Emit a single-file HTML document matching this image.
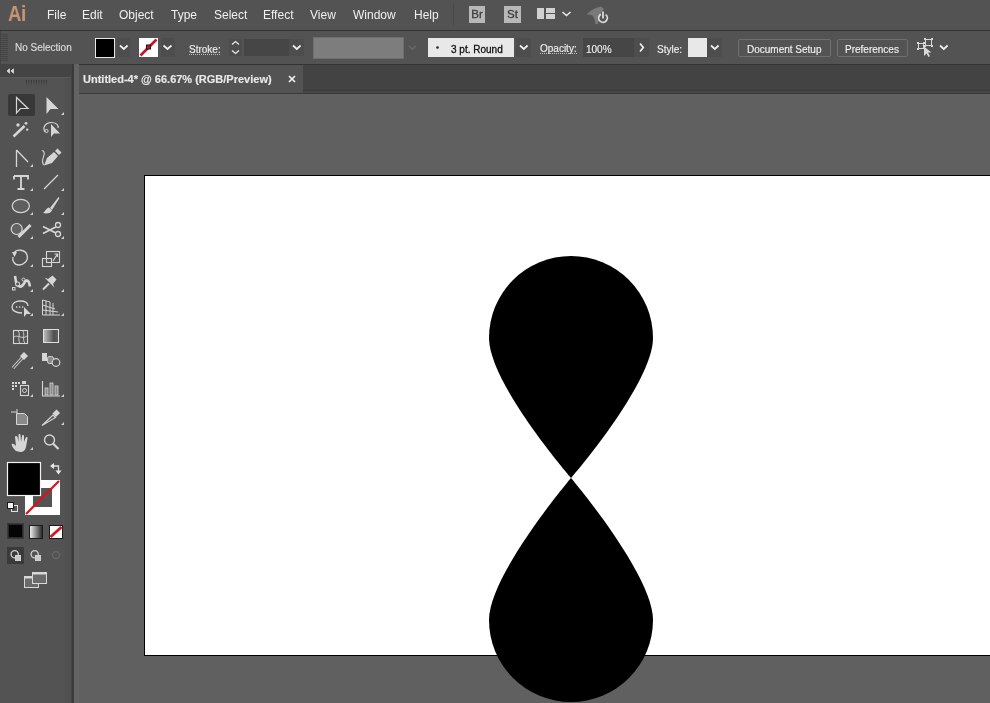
<!DOCTYPE html>
<html><head><meta charset="utf-8">
<style>
*{margin:0;padding:0;box-sizing:border-box}
html,body{-webkit-font-smoothing:antialiased;width:990px;height:703px;overflow:hidden;background:#606060;font-family:"Liberation Sans",sans-serif}
.a{position:absolute}
#menubar{left:0;top:0;width:990px;height:30px;background:#535353}
#mline{left:0;top:30px;width:990px;height:1px;background:#333}
#ctrl{left:0;top:31px;width:990px;height:33px;background:#535353}
#cline{left:0;top:64px;width:990px;height:1px;background:#333}
#tabbar{left:73px;top:65px;width:917px;height:28px;background:#434343}
#tab{left:79px;top:65px;width:224px;height:28px;background:#535353}
#tabline{left:73px;top:93px;width:917px;height:1px;background:#3a3a3a}
#tools{left:0;top:65px;width:72px;height:638px;background:#535353}
#tooldiv{left:72px;top:65px;width:1px;height:638px;background:#3a3a3a}
.mi{will-change:transform;position:absolute;top:8px;font-size:12px;color:#f0f0f0;white-space:nowrap}
.lbl{will-change:transform;position:absolute;font-size:11px;color:#eeeeee;white-space:nowrap;-webkit-text-stroke:0.15px currentColor}
#artboard{left:144px;top:175px;width:900px;height:481px;background:#fff;border:1px solid #000}
</style></head><body>
<div class="a" id="menubar"></div>
<div class="a" id="mline"></div>
<div class="a" id="ctrl"></div>
<div class="a" id="cline"></div>
<div class="a" id="tabbar"></div>
<div class="a" id="tab"></div>
<div class="a" id="tabline"></div>
<div class="a" style="left:303px;top:90px;width:687px;height:1px;background:#3a3a3a"></div>
<div class="a" style="left:303px;top:91px;width:687px;height:2px;background:#484848"></div>
<div class="a" id="tools"></div>
<div class="a" id="tooldiv"></div>
<div class="a" id="artboard"></div>
<svg class="a" style="left:0;top:0" width="990" height="703">
<path d="M571 256 A82 82 0 0 1 653 338 C653 383.3 571 478 571 478 C571 478 489 383.3 489 338 A82 82 0 0 1 571 256 Z" fill="#000"/>
<path d="M571 702 A82 82 0 0 0 653 620 C653 574.7 571 478 571 478 C571 478 489 574.7 489 620 A82 82 0 0 0 571 702 Z" fill="#000"/>
</svg>

<!-- menubar icons -->
<svg class="a" style="left:0;top:0" width="990" height="30">
 <rect x="453" y="4" width="1" height="21" fill="#474747"/>
 <rect x="469" y="6" width="16" height="17" fill="#b8b8b8"/>
 <rect x="504" y="6" width="17" height="17" fill="#b8b8b8"/>
 <g fill="#d2d2d2">
  <rect x="537" y="8" width="7" height="11"/>
  <rect x="546" y="8" width="9" height="5"/>
  <rect x="546" y="14" width="9" height="5"/>
 </g>
 <path d="M562.5 12 l4 3.5 l4 -3.5" fill="none" stroke="#e8e8e8" stroke-width="1.6"/>
 <path d="M586.5 14.5 C590 11 594 8.5 597.5 7.5 L601 6.5 L604 9 L601 12.5 C599 16 598.5 20 598 24 L595.5 24 C595 20 594 17.5 592.5 15.5 C590.5 14.5 588.5 14.5 586.5 14.5 Z" fill="#7a7a7a"/>
 <circle cx="603" cy="18" r="4.3" fill="none" stroke="#dcdcdc" stroke-width="1.8" stroke-dasharray="21.5 5.5" transform="rotate(-52 603 18)"/>
 <path d="M603 11.5 L603 18.5" stroke="#dcdcdc" stroke-width="1.8"/>
</svg>
<div class="a" style="will-change:transform;left:469px;top:6px;width:16px;height:17px;font-size:11.5px;color:#3c3c3c;text-align:center;line-height:17px;-webkit-text-stroke:0.3px #3c3c3c">Br</div>
<div class="a" style="will-change:transform;left:504px;top:6px;width:17px;height:17px;font-size:11.5px;color:#3c3c3c;text-align:center;line-height:17px;-webkit-text-stroke:0.3px #3c3c3c">St</div>
<!-- menu -->
<div class="a" style="will-change:transform;left:8px;top:1px;font-size:22px;font-weight:bold;color:#c99672;white-space:nowrap;transform:scaleX(0.84);transform-origin:0 0;letter-spacing:-0.5px">Ai</div>
<div class="mi" style="left:47px">File</div>
<div class="mi" style="left:82px">Edit</div>
<div class="mi" style="left:119px">Object</div>
<div class="mi" style="left:171px">Type</div>
<div class="mi" style="left:214px">Select</div>
<div class="mi" style="left:263px">Effect</div>
<div class="mi" style="left:310px">View</div>
<div class="mi" style="left:353px">Window</div>
<div class="mi" style="left:414px">Help</div>
<div class="lbl" style="left:83px;top:73px;font-size:11px;font-weight:bold;color:#e8e8e8">Untitled-4* @ 66.67% (RGB/Preview)</div>
<svg class="a" style="left:286px;top:73px" width="12" height="12"><path d="M3 3 L9 9 M9 3 L3 9" stroke="#f0f0f0" stroke-width="1.7"/></svg>
<div class="lbl" style="left:15px;top:42px;font-size:10px;color:#dcdcdc">No Selection</div>


<!-- toolbar -->
<svg class="a" style="left:0;top:64px" width="80" height="639">
 <rect x="0" y="0" width="72" height="13" fill="#444444"/>
 <rect x="0" y="13" width="72" height="1" fill="#5a5a5a"/>
 <path d="M9.5 4.8 L7 7 L9.5 9.2 Z M13.5 4.8 L11 7 L13.5 9.2 Z" fill="#d8d8d8" stroke="#d8d8d8" stroke-width="0.8"/>
 <defs><linearGradient id="grip" x1="0" y1="0" x2="0" y2="1"><stop offset="0" stop-color="#333"/><stop offset="1" stop-color="#555"/></linearGradient></defs>
 <g fill="url(#grip)">
  <rect x="26" y="16" width="1" height="7"/><rect x="28.5" y="16" width="1" height="7"/><rect x="31" y="16" width="1" height="7"/>
  <rect x="33.5" y="16" width="1" height="7"/><rect x="36" y="16" width="1" height="7"/><rect x="38.5" y="16" width="1" height="7"/>
  <rect x="41" y="16" width="1" height="7"/><rect x="43.5" y="16" width="1" height="7"/><rect x="46" y="16" width="1" height="7"/>
 </g>
 <rect x="65" y="14" width="6" height="625" fill="#505050"/>
 <rect x="71" y="0" width="1" height="639" fill="#444"/>
 <rect x="72" y="0" width="2" height="639" fill="#3a3a3a"/>
 <rect x="74" y="0" width="5" height="639" fill="#636363"/>
</svg>
<svg class="a" style="left:0;top:0" width="72" height="703">
 <rect x="8" y="94" width="27" height="22" rx="2" fill="#383838"/>
 <g fill="#d6d6d6" stroke="#d6d6d6">
 <!-- selection -->
 <path d="M16.5 97.5 L16.5 113 L20.5 108.5 L28 108.5 Z" fill="none" stroke-width="1.2"/>
 <!-- direct selection -->
 <path d="M46.5 97 L46.5 114 L50.5 109 L58.5 109 Z" stroke="none"/>
 <!-- magic wand -->
 <path d="M13.5 136.5 L24.5 126" stroke-width="2.5" fill="none"/>
 <circle cx="18" cy="125" r="1.7" stroke="none"/>
 <circle cx="26" cy="123.3" r="1.4" stroke="none"/>
 <circle cx="27.2" cy="129.6" r="1.2" stroke="none"/>
 <!-- lasso -->
 <path d="M45 132 C42 127 46 122.5 51 122.5 C56 122.5 59 125 58 128" fill="none" stroke-width="1.2"/>
 <circle cx="46.5" cy="131" r="1.6" fill="none" stroke-width="1"/>
 <path d="M51 124 L51 137 L54 133.5 L60 133.5 Z" stroke="none"/>
 <!-- curvature -->
 <path d="M16.5 150 L16.5 167 M16.5 150 L28 162" fill="none" stroke-width="1.3"/>
 <!-- pen -->
 <path d="M44 165.5 L47 158 L54 152 L58 156 L52 163 Z" stroke="none"/>
 <path d="M55 151 L57.5 148.5 L61.5 152.5 L59 155 Z" stroke="none"/>
 <path d="M44 165 C41 163 43 158 44 155 C45 152 43 150 42 151" fill="none" stroke-width="1.1"/>
 <!-- type -->
 <path d="M14 176 L28 176 L28 179.5 M14 179.5 L14 176 M21 176 L21 189 M17.5 189 L24.5 189" fill="none" stroke-width="1.8"/>
 <!-- line -->
 <path d="M44 189 L58 175" fill="none" stroke-width="1.3"/>
 <!-- ellipse -->
 <ellipse cx="20.8" cy="206" rx="8.6" ry="6.6" fill="#5e5e5e" stroke-width="1.2"/>
 <!-- paintbrush -->
 <path d="M50 208 L58.5 197 L59.5 198 L52 210 Z" stroke="none"/>
 <path d="M43 213 C45 212 46 208 49 207.5 L52 210.5 C51 213 47 214 43 213 Z" stroke="none"/>
 <!-- shaper/pencil -->
 <circle cx="16.7" cy="229" r="5.5" fill="#626262" stroke-width="1.2"/>
 <path d="M18.5 237 L30.5 225" fill="none" stroke-width="3"/>
 <!-- scissors -->
 <circle cx="58" cy="225" r="2.5" fill="none" stroke-width="1.3"/>
 <circle cx="58" cy="234" r="2.5" fill="none" stroke-width="1.3"/>
 <path d="M43 226.5 L55.8 233 M43 233.5 L55.8 227" fill="none" stroke-width="1.8"/>
 <!-- rotate -->
 <path d="M14 253 C16.5 249 25 249 27 255 C29 261 23 265 19 265 C14 265 12 260 13 257" fill="none" stroke-width="1.3"/>
 <path d="M12 252 L17 252 L14.5 257 Z" stroke="none"/>
 <!-- scale -->
 <rect x="46.5" y="251.5" width="13" height="11" fill="none" stroke-width="1.1"/>
 <rect x="42.5" y="258.5" width="9" height="8" fill="none" stroke-width="1.1"/>
 <path d="M53 261 L57.5 254 M54.5 254 L57.5 254 L57.5 257" fill="none" stroke-width="1.2"/>
 <!-- width/warp -->
 <path d="M15 276 C16 281 15.5 285 19.5 286.5 C23.5 287.5 24 281.5 26.5 280.5 C28.5 280 29.5 283 29.8 286.5" fill="none" stroke-width="2.6"/>
 <circle cx="17.6" cy="284" r="2" fill="#535353" stroke-width="1.1"/>
 <circle cx="23.5" cy="279.5" r="1.5" fill="#535353" stroke-width="1"/>
 <rect x="12.5" y="287.5" width="2.5" height="2.5" fill="none" stroke-width="1"/>
 <!-- puppet pin -->
 <path d="M48 279 L52.5 275.5 L56.5 279.5 L53 284 L54.5 287.5 L44.5 277.5 Z" stroke="none"/>
 <path d="M49 283.5 L43 289.5" fill="none" stroke-width="2"/>
 <!-- shape builder -->
 <path d="M22 313 C15 313 12 310 12 307 C12 303 16 301 20 301 C25 301 28 303 28 306" fill="none" stroke-width="1.3"/>
 <path d="M16 307 h1.3 M19 307 h1.3 M22 307 h1.3" stroke-width="1.3"/>
 <path d="M24 307 L24 317 L26.5 314 L31 314 Z" stroke="none"/>
 <!-- perspective grid -->
 <path d="M42.5 300 L42.5 315 L60 315 M42.5 300 L50 302 L50 315 M42.5 305 L55 309 M42.5 310 L58 312 M46 301 L46 315 M53 303 L53 315" fill="none" stroke-width="1"/>
 <!-- mesh -->
 <rect x="13.5" y="330.5" width="14" height="13" fill="none" stroke-width="1.1"/>
 <path d="M14 337 C18 334 22 340 27 336 M18 331 C21 334 17 339 20 343 M23 331 C25 335 22 340 25 343" fill="none" stroke-width="0.9"/>
 <!-- gradient -->
 <rect x="43.5" y="329.5" width="15" height="13" fill="url(#gr)" stroke="#e0e0e0" stroke-width="1"/>
 <!-- eyedropper -->
 <path d="M13 368 L22 358" fill="none" stroke-width="3.2"/>
 <path d="M13 368 L22 358" fill="none" stroke="#535353" stroke-width="1.2"/>
 <path d="M20 356 L24 352 L28 356 L24 360 Z" stroke="none"/>
 <!-- blend -->
 <rect x="42" y="353" width="5" height="8" stroke="none"/>
 <rect x="47.5" y="356.5" width="6" height="7" rx="2" fill="#8a8a8a" stroke-width="1"/>
 <circle cx="56" cy="362.5" r="3.8" fill="#535353" stroke-width="1.2"/>
 <!-- symbol sprayer -->
 <g stroke="none"><rect x="12" y="382" width="2" height="2"/><rect x="15" y="382" width="2" height="2"/><rect x="18" y="382" width="2" height="2"/><rect x="12" y="385" width="2" height="2"/><rect x="15" y="385" width="2" height="2"/><rect x="12" y="388" width="2" height="2"/></g>
 <rect x="20.5" y="385.5" width="8" height="10" fill="none" stroke-width="1.1"/>
 <rect x="22" y="381" width="4" height="3" stroke="none"/>
 <circle cx="24.5" cy="390.5" r="2" fill="none" stroke-width="1"/>
 <!-- column graph -->
 <path d="M42.5 381 L42.5 396 L60 396" fill="none" stroke-width="1.1"/>
 <rect x="45" y="388" width="3" height="7" fill="#8a8a8a" stroke-width="0.8"/>
 <rect x="50" y="383" width="3" height="12" fill="#8a8a8a" stroke-width="0.8"/>
 <rect x="55" y="386" width="3" height="9" fill="#8a8a8a" stroke-width="0.8"/>
 <!-- artboard -->
 <path d="M11 412 L17 412 M17 409 L17 418" fill="none" stroke-width="1"/>
 <path d="M16.5 413.5 L24.5 413.5 L27.5 416.5 L27.5 424.5 L16.5 424.5 Z" fill="#8a8a8a" stroke-width="1"/>
 <!-- slice -->
 <path d="M42 425.5 L53 415 L55.5 417.5 Z" fill="none" stroke-width="1.2"/>
 <path d="M52.5 413.5 L56.5 409.5 L60 413 L56 417 Z" stroke="none"/>
 <!-- hand -->
 <path d="M16 451 C13 448 11 445 12 444 C13 443 15 445 16 446 L15 437 C15 435.5 17 435.5 17.5 437 L18.5 442 L18.5 435 C18.5 433.5 20.5 433.5 20.5 435 L21 442 L22 436 C22 434.5 24 434.5 24 436 L24 442 L25.5 438 C26 436.5 28 437 27.5 438.5 L26 447 C25 451 23 452 20 452 Z" stroke="none"/>
 <!-- zoom -->
 <circle cx="49.5" cy="440" r="5" fill="none" stroke-width="1.4"/>
 <path d="M53 443.5 L58.5 449" fill="none" stroke-width="2.2"/>
 </g>
 <!-- tool corner triangles -->
 <g fill="#d0d0d0">
  <path d="M64 112 L64 115 L61 115 Z"/>
  <path d="M33 164 L33 167 L30 167 Z"/>
  <path d="M33 188 L33 191 L30 191 Z"/><path d="M64 188 L64 191 L61 191 Z"/>
  <path d="M33 212 L33 215 L30 215 Z"/><path d="M64 212 L64 215 L61 215 Z"/>
  <path d="M33 236 L33 239 L30 239 Z"/><path d="M64 236 L64 239 L61 239 Z"/>
  <path d="M33 264 L33 267 L30 267 Z"/><path d="M64 264 L64 267 L61 267 Z"/>
  <path d="M33 289 L33 292 L30 292 Z"/><path d="M64 289 L64 292 L61 292 Z"/>
  <path d="M33 313 L33 316 L30 316 Z"/><path d="M64 313 L64 316 L61 316 Z"/>
  <path d="M33 366 L33 369 L30 369 Z"/>
  <path d="M33 394 L33 397 L30 397 Z"/><path d="M64 394 L64 397 L61 397 Z"/>
  <path d="M64 422 L64 425 L61 425 Z"/>
  <path d="M33 447 L33 450 L30 450 Z"/>
 </g>
 <defs><linearGradient id="gr"><stop offset="0" stop-color="#c0c0c0"/><stop offset="0.7" stop-color="#505050"/><stop offset="1" stop-color="#606060"/></linearGradient></defs>
 <!-- fill/stroke -->
 <rect x="25" y="480" width="35" height="35" fill="#fff"/>
 <rect x="33" y="488" width="19" height="19" fill="#535353"/>
 <path d="M26 514 L59 481" stroke="#d8141c" stroke-width="2.2"/>
 <rect x="7.5" y="462.5" width="33" height="33" fill="#000" stroke="#f2f2f2" stroke-width="1.2"/>
 <path d="M53 466 L58.5 466 L58.5 471" fill="none" stroke="#e0e0e0" stroke-width="1.3"/><path d="M50 466 L54 463 L54 469 Z M58.5 474.5 L55.5 470.5 L61.5 470.5 Z" fill="#e8e8e8"/>
 <rect x="11.5" y="505.5" width="6" height="6" fill="#535353" stroke="#e0e0e0" stroke-width="1"/>
 <rect x="7.5" y="502.5" width="6" height="6" fill="#f2f2f2" stroke="#1a1a1a" stroke-width="1"/>
 <!-- color/gradient/none -->
 <rect x="7" y="523" width="17" height="16" fill="#3a3a3a"/>
 <rect x="8.5" y="524.5" width="14" height="13" fill="#050505" stroke="#2a2a2a"/>
 <rect x="29.5" y="525.5" width="13" height="13" fill="url(#gr2)" stroke="#1a1a1a"/>
 <rect x="49.5" y="525.5" width="13" height="13" fill="#fff" stroke="#1a1a1a"/>
 <path d="M50.5 537 L61.5 527" stroke="#d8141c" stroke-width="2.8"/>
 <defs><linearGradient id="gr2"><stop offset="0" stop-color="#f5f5f5"/><stop offset="1" stop-color="#222"/></linearGradient></defs>
 <!-- draw modes -->
 <rect x="7" y="547" width="17" height="17" fill="#3a3a3a"/>
 <g fill="none" stroke="#d0d0d0" stroke-width="1">
  <circle cx="14.7" cy="554.3" r="3.6" stroke-width="1.3"/><rect x="15.5" y="555.5" width="5" height="5" fill="#c8c8c8"/>
  <circle cx="34.7" cy="554.3" r="3.6" stroke-width="1.3"/><rect x="35.5" y="555.5" width="5" height="5" fill="#c8c8c8"/>
 </g>
 <circle cx="56" cy="555" r="3.5" fill="none" stroke="#666" stroke-width="1.3"/>
 <!-- screen mode -->
 <rect x="24.5" y="576.5" width="14" height="11" fill="#6a6a6a" stroke="#d8d8d8"/>
 <rect x="24.5" y="576.5" width="14" height="2" fill="#d8d8d8" stroke="none"/>
 <rect x="32.5" y="572.5" width="14" height="11" fill="#6a6a6a" stroke="#d8d8d8"/>
 <rect x="32.5" y="572.5" width="14" height="2" fill="#d8d8d8" stroke="none"/>
</svg>
<!-- control bar -->
<svg class="a" style="left:0;top:31px" width="990" height="33">
 <!-- grip -->
 <rect x="0" y="0" width="1" height="33" fill="#444"/>
 <g fill="#444"><rect x="1" y="3" width="7" height="1"/><rect x="1" y="5" width="7" height="1"/><rect x="1" y="7" width="7" height="1"/><rect x="1" y="9" width="7" height="1"/><rect x="1" y="11" width="7" height="1"/><rect x="1" y="13" width="7" height="1"/><rect x="1" y="15" width="7" height="1"/><rect x="1" y="17" width="7" height="1"/><rect x="1" y="19" width="7" height="1"/><rect x="1" y="21" width="7" height="1"/><rect x="1" y="23" width="7" height="1"/><rect x="1" y="25" width="7" height="1"/><rect x="1" y="27" width="7" height="1"/><rect x="1" y="29" width="7" height="1"/></g>
 <!-- fill swatch -->
 <rect x="95" y="7" width="19" height="19" fill="#000" stroke="#e6e6e6" stroke-width="1" transform="translate(0.5 0.5)"/>
 <rect x="117" y="7" width="13" height="19" fill="#4d4d4d"/>
 <path d="M120 14.5 l3.8 3.5 l3.8 -3.5" fill="none" stroke="#f0f0f0" stroke-width="1.7"/>
 <!-- stroke swatch -->
 <rect x="139" y="7" width="19" height="19" fill="#fff"/>
 <path d="M140.5 24.5 L156.5 8.5" stroke="#cc1122" stroke-width="2.6"/>
 <rect x="146.5" y="14" width="4" height="4" fill="#cc1122" stroke="#1a1a1a" stroke-width="1"/>
 <rect x="161" y="7" width="14" height="19" fill="#4d4d4d"/>
 <path d="M163.5 14.5 l4 3.5 l4 -3.5" fill="none" stroke="#f0f0f0" stroke-width="1.7"/>
 <!-- stroke label underline -->
 <path d="M189 23.5 H220" stroke="#bdbdbd" stroke-width="1" stroke-dasharray="1 1"/>
 <!-- spinner -->
 <rect x="229" y="8" width="13" height="17" fill="#4d4d4d"/>
 <path d="M232 13.5 l3.5 -3 l3.5 3" fill="none" stroke="#e8e8e8" stroke-width="1.3"/>
 <path d="M232 19.5 l3.5 3 l3.5 -3" fill="none" stroke="#e8e8e8" stroke-width="1.3"/>
 <rect x="244" y="8" width="45" height="17" fill="#464646"/>
 <rect x="289" y="8" width="15" height="17" fill="#4d4d4d"/>
 <path d="M293 14.5 l3.8 3.5 l3.8 -3.5" fill="none" stroke="#f0f0f0" stroke-width="1.7"/>
 <!-- width profile -->
 <rect x="313" y="6" width="90" height="21" fill="#7d7d7d" stroke="#6e6e6e" stroke-width="1" transform="translate(0.5 0.5)"/>
 <path d="M409 15 l3.5 3 l3.5 -3" fill="none" stroke="#6a6a6a" stroke-width="1.4"/>
 <!-- brush -->
 <rect x="428" y="7" width="86" height="19" fill="#e8e8e8"/>
 <circle cx="437.5" cy="16.5" r="1.3" fill="#222"/>
 <rect x="516" y="7" width="15" height="19" fill="#4d4d4d"/>
 <path d="M520 14.5 l3.8 3.5 l3.8 -3.5" fill="none" stroke="#f0f0f0" stroke-width="1.7"/>
 <!-- opacity -->
 <path d="M540 22.5 H577" stroke="#bdbdbd" stroke-width="1" stroke-dasharray="1 1"/>
 <rect x="583" y="7" width="51" height="19" fill="#464646"/>
 <rect x="634" y="7" width="15" height="19" fill="#4d4d4d"/>
 <path d="M640 12.5 l3.3 4 l-3.3 4" fill="none" stroke="#f0f0f0" stroke-width="1.7"/>
 <!-- style -->
 <rect x="688" y="7" width="19" height="19" fill="#e8e8e8"/>
 <rect x="707" y="7" width="15" height="19" fill="#4d4d4d"/>
 <path d="M711 14.5 l3.8 3.5 l3.8 -3.5" fill="none" stroke="#f0f0f0" stroke-width="1.7"/>
 <!-- buttons -->
 <rect x="738" y="8" width="92" height="17" rx="1.5" fill="#535353" stroke="#6f6f6f" stroke-width="1" transform="translate(0.5 0.5)"/>
 <rect x="837" y="8" width="70" height="17" rx="1.5" fill="#535353" stroke="#6f6f6f" stroke-width="1" transform="translate(0.5 0.5)"/>
 <!-- align icon -->
 <g fill="none" stroke="#d8d8d8" stroke-width="1">
  <rect x="918.5" y="12.5" width="5" height="5"/>
  <rect x="925.5" y="8.5" width="6" height="6"/>
 </g>
 <g fill="#d8d8d8">
  <rect x="917" y="11" width="2" height="2"/><rect x="923" y="11" width="2" height="2"/><rect x="917" y="17" width="2" height="2"/>
  <rect x="924" y="7" width="2" height="2"/><rect x="931" y="7" width="2" height="2"/><rect x="931" y="14" width="2" height="2"/><rect x="924" y="14" width="2" height="2"/>
 </g>
 <path d="M924 15.5 L924 25 L926.5 22.5 L928.5 26 L930 25.3 L928 21.5 L931.5 21.5 Z" fill="#d8d8d8"/>
 <path d="M940 14.5 l3.8 3.5 l3.8 -3.5" fill="none" stroke="#f0f0f0" stroke-width="1.7"/>
</svg>
<div class="lbl" style="left:189px;top:44px;font-size:10px">Stroke:</div>
<div class="lbl" style="left:451px;top:44px;font-size:10px;color:#111;-webkit-text-stroke:0.3px #111">3 pt. Round</div>
<div class="lbl" style="left:540px;top:43px;font-size:10px">Opacity:</div>
<div class="lbl" style="left:586px;top:44px;font-size:10px">100%</div>
<div class="lbl" style="left:657px;top:44px;font-size:10px">Style:</div>
<div class="lbl" style="left:747px;top:44px;font-size:10px;color:#f0f0f0">Document Setup</div>
<div class="lbl" style="left:845px;top:44px;font-size:10px;color:#f0f0f0">Preferences</div>
</body></html>
